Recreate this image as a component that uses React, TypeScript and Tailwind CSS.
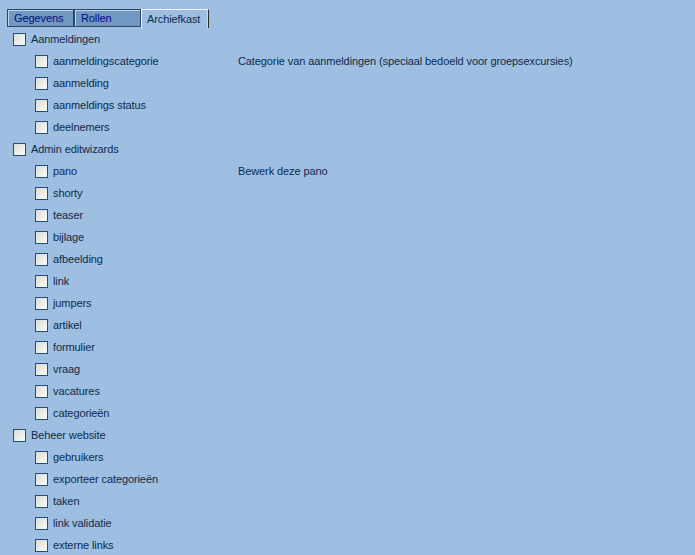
import React from "react";

interface Item {
  label: string;
  description?: string;
}

interface Group {
  label: string;
  items: Item[];
}

const groups: Group[] = [
  {
    label: "Aanmeldingen",
    items: [
      {
        label: "aanmeldingscategorie",
        description: "Categorie van aanmeldingen (speciaal bedoeld voor groepsexcursies)",
      },
      { label: "aanmelding" },
      { label: "aanmeldings status" },
      { label: "deelnemers" },
    ],
  },
  {
    label: "Admin editwizards",
    items: [
      { label: "pano", description: "Bewerk deze pano" },
      { label: "shorty" },
      { label: "teaser" },
      { label: "bijlage" },
      { label: "afbeelding" },
      { label: "link" },
      { label: "jumpers" },
      { label: "artikel" },
      { label: "formulier" },
      { label: "vraag" },
      { label: "vacatures" },
      { label: "categorieën" },
    ],
  },
  {
    label: "Beheer website",
    items: [
      { label: "gebruikers" },
      { label: "exporteer categorieën" },
      { label: "taken" },
      { label: "link validatie" },
      { label: "externe links" },
    ],
  },
];

const Box: React.FC = () => (
  <span className="block h-[13px] w-[13px] shrink-0 border border-[#1c5180] bg-gradient-to-br from-[#dcdcd5] to-[#fbfbf9]" />
);

const Row: React.FC<{ item: Item; indent?: boolean }> = ({ item, indent }) => (
  <div className="flex h-[22px] items-center">
    <div className={indent ? "flex w-[238px] items-center pl-[35px]" : "flex items-center pl-[13px]"}>
      <Box />
      <span className="ml-[5px] whitespace-nowrap">{item.label}</span>
    </div>
    {item.description && <span className="whitespace-nowrap">{item.description}</span>}
  </div>
);

export default function App() {
  const tabs = ["Gegevens", "Rollen", "Archiefkast"];
  return (
    <div
      className="h-[555px] w-[695px] overflow-hidden bg-[#9ebfe1] text-[11px] tracking-[-0.1px] text-[#0c2a4c]"
      style={{ fontFamily: '"Liberation Sans", Arial, sans-serif' }}
    >
      <div className="flex h-[28px] items-end pl-[7px]">
        {tabs.map((t, i) =>
          i === 2 ? (
            <div
              key={t}
              className="flex h-[19px] w-[68px] items-center border-l border-t border-r border-l-[#f4f7fb] border-t-[#f4f7fb] border-r-[#2a2a2a] pl-[5px] shadow-[inset_-1px_0_0_#c9d9ec]"
            >
              {t}
            </div>
          ) : (
            <div
              key={t}
              className="mb-[1px] flex h-[18px] w-[67px] items-center border border-[#2d4763] bg-[#6f99c2] pl-[6px] text-[#000c84] shadow-[inset_1px_1px_0_#c3d5ea]"
            >
              {t}
            </div>
          )
        )}
      </div>
      <div className="flex flex-col">
        {groups.map((g) => (
          <React.Fragment key={g.label}>
            <Row item={{ label: g.label }} />
            {g.items.map((it) => (
              <Row key={it.label} item={it} indent />
            ))}
          </React.Fragment>
        ))}
      </div>
    </div>
  );
}
